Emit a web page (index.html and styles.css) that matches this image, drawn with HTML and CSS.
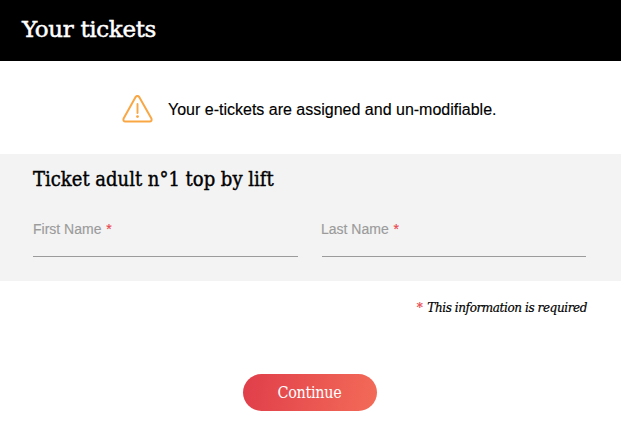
FILE: index.html
```html
<!DOCTYPE html>
<html lang="en">
<head>
<meta charset="utf-8">
<title>Your tickets</title>
<link rel="stylesheet" href="styles.css">
</head>
<body>
<header class="header"><h1 class="title">Your tickets</h1></header>
<main>
  <div class="notice">
    <svg class="notice-icon" width="31" height="28" viewBox="0 0 31 28" fill="none" stroke="#f9a744" stroke-width="2" stroke-linecap="round" stroke-linejoin="round">
      <path d="M13.6 2 Q15.4 -.2 17.2 2 L29.4 23.4 Q30.2 26.4 27.6 26.5 H3.4 Q.8 26.4 1.6 23.4 Z"/>
      <path d="M15.5 9V18" stroke-width="1.9"/>
      <circle cx="15.5" cy="21.6" r="1.4" fill="#f9a744" stroke="none"/>
    </svg>
    <p class="notice-text">Your e-tickets are assigned and un-modifiable.</p>
  </div>
  <form>
    <section class="ticket">
      <h2 class="ticket-title">Ticket adult n°1 top by lift</h2>
      <div class="fields">
        <label class="field"><span class="label">First Name <span class="star">*</span></span><input class="input" type="text"></label>
        <label class="field"><span class="label label-last">Last Name <span class="star">*</span></span><input class="input" type="text"></label>
      </div>
    </section>
    <p class="required"><span class="required-star">*</span><span class="required-text">This information is required</span></p>
    <div class="actions"><button class="button" type="button"><span class="button-text">Continue</span></button></div>
  </form>
</main>
</body>
</html>
```
FILE: styles.css
```css
* { box-sizing: border-box; }
body { margin: 0; background: #fff; color: #000; font-family: "Liberation Sans", Arial, sans-serif; }
h1, h2, p { margin: 0; font-weight: 400; white-space: nowrap; }
.title, .required { font-family: "Roboto Slab", "DejaVu Serif", serif; }
.ticket-title, .button { font-family: "Roboto Slab", "DejaVu Serif Condensed", "DejaVu Serif", serif; font-stretch: condensed; }
.header { height: 61px; padding: 14px 22px; background: #000; color: #fff; }
.title { font-size: 23px; line-height: 30px; letter-spacing: -0.35px; -webkit-text-stroke: 0.5px; }
.notice { height: 93px; display: flex; align-items: center; gap: 15px; padding: 4px 0 0 122px; }
.notice-icon { flex: none; margin-top: -2px; }
.notice-text { font-size: 16px; line-height: 20px; -webkit-text-stroke: 0.15px; }
.ticket { height: 127px; padding: 12px 35px 0 33px; background: #f3f3f3; }
.ticket-title { font-size: 20px; line-height: 26px; -webkit-text-stroke: 0.4px; }
.fields { display: grid; grid-template-columns: 265px 264px; gap: 24px; margin-top: 28px; }
.field { display: flex; flex-direction: column; color: #9b9b9b; font-size: 14px; line-height: 18px; }
.label { -webkit-text-stroke: 0.15px; }
.label-last { margin-left: -1px; }
.star { margin-left: 1px; color: #e8464f; }
.input { width: 100%; height: 19px; padding: 0; border: 0; border-bottom: 1px solid #9b9b9b; border-radius: 0; background: transparent; outline: 0; font: inherit; }
.required { display: flex; justify-content: flex-end; gap: 5px; padding: 18px 34px 0 0; font-size: 12px; line-height: 18px; font-style: italic; letter-spacing: -0.4px; -webkit-text-stroke: 0.2px; }
.required-star { color: #e8464f; }
.actions { display: flex; justify-content: center; padding: 57px 2px 0 0; }
.button { width: 134px; height: 37px; padding: 0; border: 0; border-radius: 19px; background: linear-gradient(100deg, #e03e4a, #f36b58); color: #fff; font-size: 16px; letter-spacing: -0.3px; }
```
